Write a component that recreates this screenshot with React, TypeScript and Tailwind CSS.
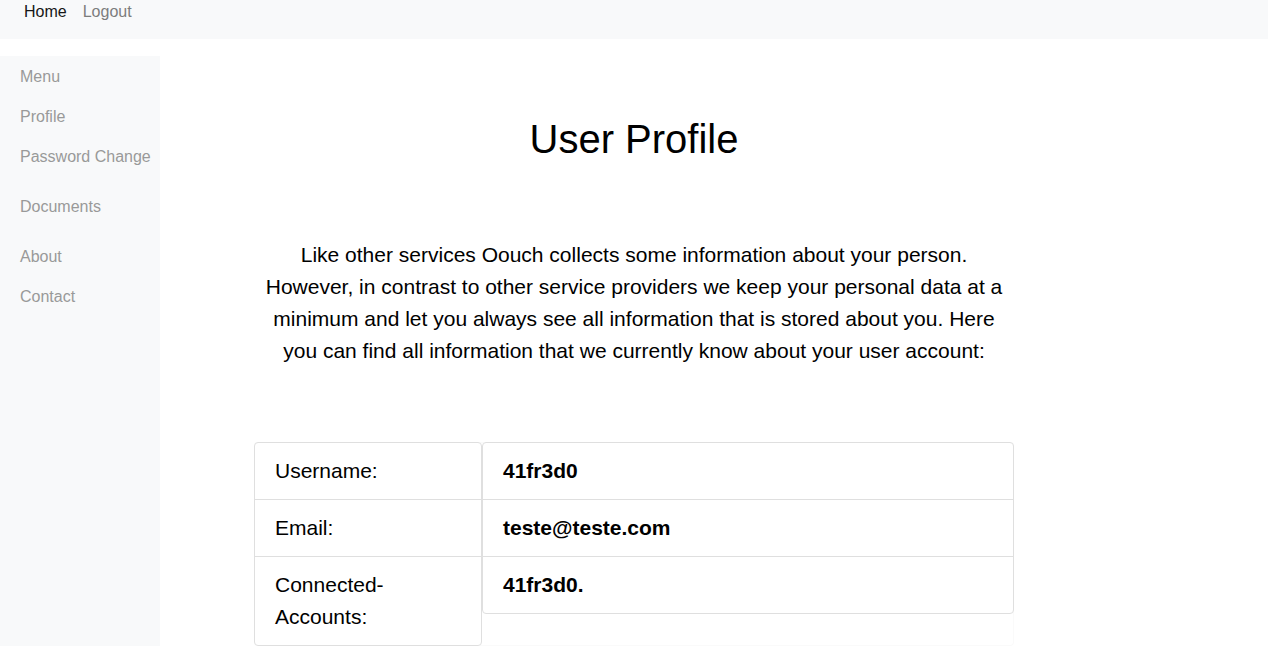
import React from "react";

const navGroups = [
  ["Menu", "Profile", "Password Change"],
  ["Documents"],
  ["About", "Contact"],
];

const labels = ["Username:", "Email:", "Connected-Accounts:"];
const values = ["41fr3d0", "teste@teste.com", "41fr3d0."];

function ListGroup({ items, className }: { items: string[]; className: string }) {
  return (
    <ul className={`divide-y divide-[#dfdfdf] self-start rounded border border-[#dfdfdf] bg-white ${className}`}>
      {items.map((item) => (
        <li key={item} className="px-5 py-3">
          {item}
        </li>
      ))}
    </ul>
  );
}

export default function App() {
  return (
    <div className="flex h-screen flex-col overflow-hidden bg-white font-['Liberation_Sans',Arial,sans-serif] text-black">
      <nav className="mb-[17px] flex h-[39px] shrink-0 gap-4 bg-[#f8f9fa] px-6 text-base leading-6">
        <a href="#home" className="text-[#161717]">Home</a>
        <a href="#logout" className="text-[#7c7d7d]">Logout</a>
      </nav>
      <div className="flex min-h-0 flex-1">
        <aside className="flex w-40 shrink-0 flex-col gap-[10px] bg-[#f8f9fa] pt-px text-base leading-6">
          {navGroups.map((group) => (
            <ul key={group[0]}>
              {group.map((name) => (
                <li key={name}>
                  <a href="#section" className="block py-2 pl-5 whitespace-nowrap text-[#999999]">{name}</a>
                </li>
              ))}
            </ul>
          ))}
        </aside>
        <main className="mr-40 flex-1 pt-[59px]">
          <h1 className="text-center text-[40px] leading-12">User Profile</h1>
          <div className="mx-auto w-5/6 max-w-[760px] text-[21px] leading-8">
            <p className="mt-[76px] px-1 text-center">
              Like other services Oouch collects some information about your person. However, in contrast to
              other service providers we keep your personal data at a minimum and let you always see all
              information that is stored about you. Here you can find all information that we currently know
              about your user account:
            </p>
            <div className="mt-[75px] flex rounded inset-shadow-[0_0_0_1px_#fafafa]">
              <ListGroup items={labels} className="w-3/10" />
              <ListGroup items={values} className="w-7/10 font-bold" />
            </div>
          </div>
        </main>
      </div>
    </div>
  );
}
